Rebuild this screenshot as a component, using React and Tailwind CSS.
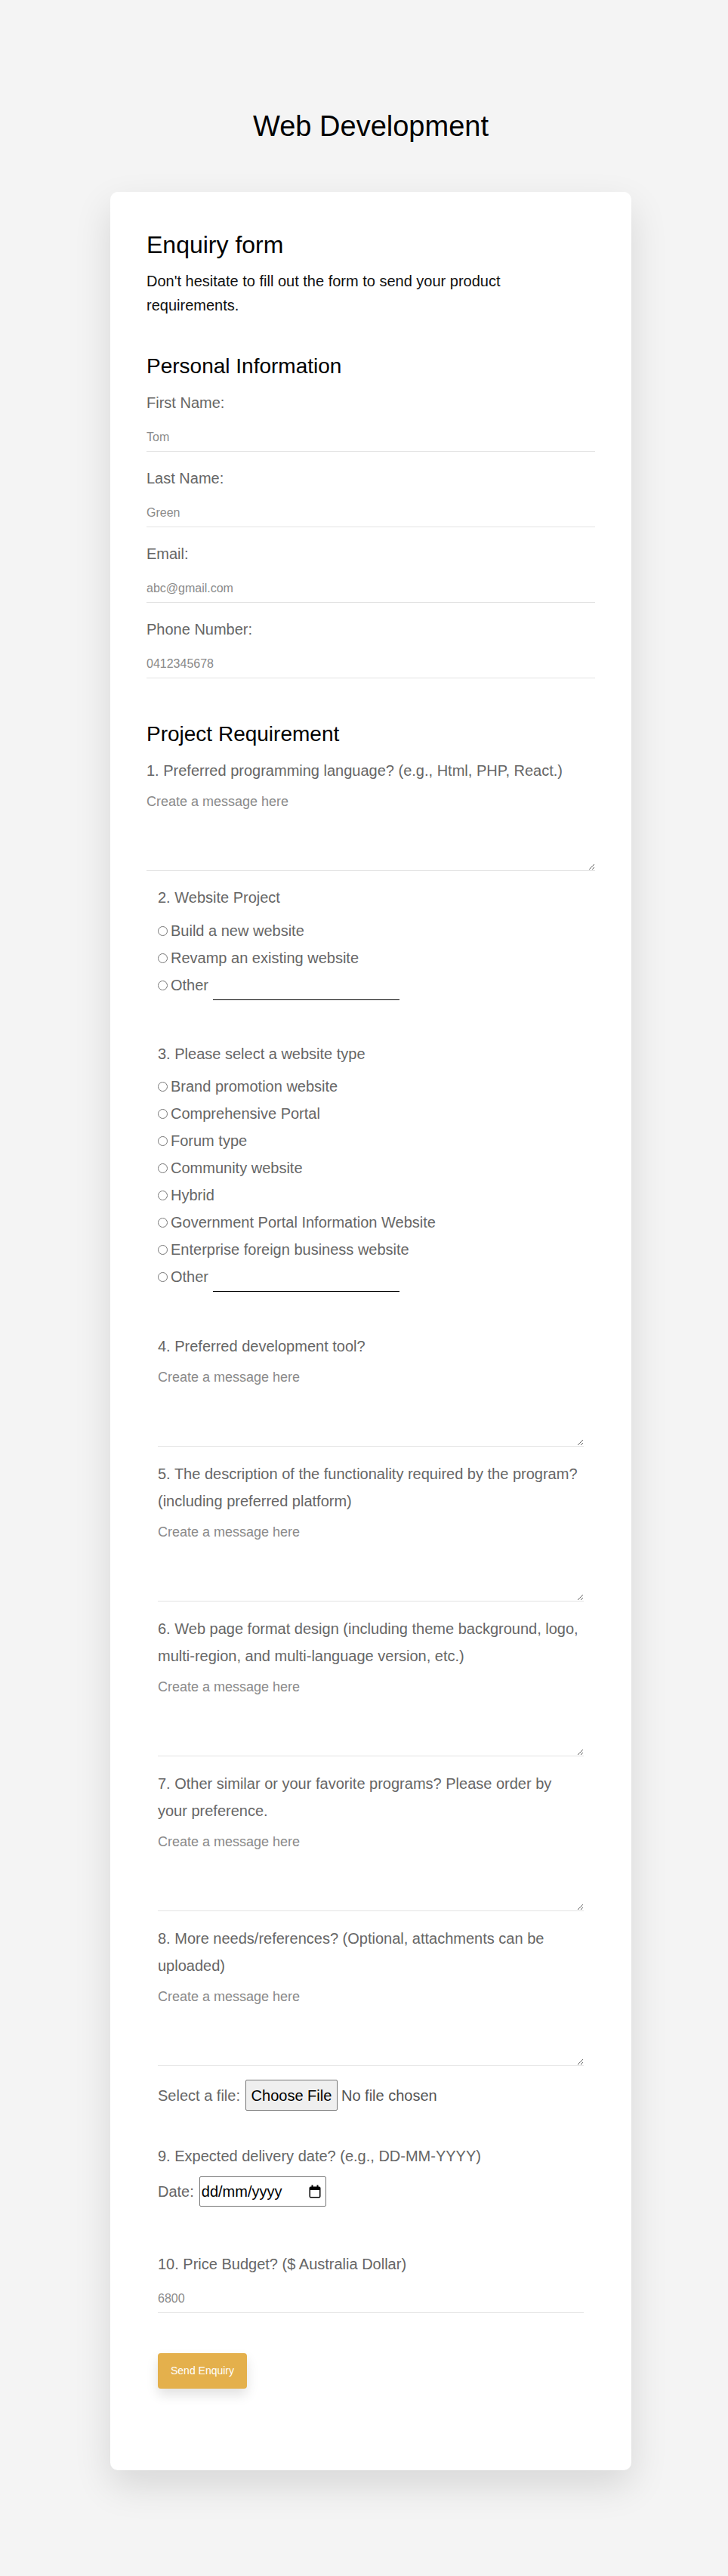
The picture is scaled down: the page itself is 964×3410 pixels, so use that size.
import React from "react";

function Field({ label, placeholder, first }) {
  return (
    <div className={first ? "mt-[14px]" : "mt-[17px]"}>
      <label className="block text-[20px] leading-[36px] text-[#666]">{label}</label>
      <input
        type="text"
        placeholder={placeholder}
        className="mt-[9px] block h-[38px] w-full border-b border-[#e3e3e3] px-0 text-[16px] text-[#555] outline-none placeholder:text-[#8a8a8a]"
      />
    </div>
  );
}

function Radio({ label, name, other }) {
  return (
    <div className="flex h-[36px] items-center text-[20px] leading-[36px] text-[#666]">
      <input type="radio" name={name} className="m-0 mr-[4px] h-[13px] w-[13px] shrink-0" />
      <span>{label}</span>
      {other && (
        <input
          type="text"
          className="ml-[6px] h-[40px] w-[247px] border-b border-black px-0 text-[16px] outline-none"
        />
      )}
    </div>
  );
}

function Question({ text, mt = "mt-[18px]" }) {
  return (
    <div className={mt}>
      <label className="block text-[20px] leading-[36px] text-[#666]">{text}</label>
      <textarea
        placeholder="Create a message here"
        className="mt-[8px] block h-[107px] w-full border-b border-[#e3e3e3] px-0 py-[2px] text-[18px] leading-normal text-[#555] outline-none placeholder:text-[#8a8a8a]"
      />
    </div>
  );
}

function CalendarIcon() {
  return (
    <svg width="16" height="18" viewBox="0 0 16 18" className="shrink-0">
      <rect x="3.5" y="0.5" width="2" height="3" fill="#000" />
      <rect x="10.5" y="0.5" width="2" height="3" fill="#000" />
      <rect x="1.25" y="3.25" width="13.5" height="13.5" rx="1.2" fill="none" stroke="#000" strokeWidth="1.5" />
      <rect x="1" y="3" width="14" height="4" rx="1" fill="#000" />
    </svg>
  );
}

export default function App() {
  const types = [
    "Brand promotion website",
    "Comprehensive Portal",
    "Forum type",
    "Community website",
    "Hybrid",
    "Government Portal Information Website",
    "Enterprise foreign business website",
  ];
  return (
    <div className="min-h-[3410px] bg-[#f4f4f4] pb-[140px] pt-[145px] font-['Liberation_Sans',Arial,sans-serif] text-black">
      <div className="ml-[146px] w-[690px]">
        <h1 className="text-center text-[38px] font-normal leading-[44px] text-black">Web Development</h1>

        <div className="mt-[65px] rounded-[10px] bg-white px-[48px] pb-[108px] pt-[52px] shadow-[0_20px_50px_rgba(0,0,0,0.12)]">
          <h2 className="text-[32px] font-normal leading-[37px] text-black">Enquiry form</h2>
          <p className="mt-[13px] max-w-[585px] text-[20px] leading-[32px] text-[#111]">
            Don't hesitate to fill out the form to send your product requirements.
          </p>

          <h3 className="mt-[49px] text-[28px] font-normal leading-[32px] text-black">Personal Information</h3>
          <Field label="First Name:" placeholder="Tom" first />
          <Field label="Last Name:" placeholder="Green" />
          <Field label="Email:" placeholder="abc@gmail.com" />
          <Field label="Phone Number:" placeholder="0412345678" />

          <h3 className="mt-[58px] text-[28px] font-normal leading-[32px] text-black">Project Requirement</h3>
          <Question text="1. Preferred programming language? (e.g., Html, PHP, React.)" mt="mt-[14px]" />

          <div className="px-[15px]">
            <div className="mt-[17px]">
              <div className="text-[20px] leading-[36px] text-[#666]">2. Website Project</div>
              <div className="mt-[8px]">
                <Radio name="project" label="Build a new website" />
                <Radio name="project" label="Revamp an existing website" />
                <Radio name="project" label="Other" other />
              </div>
            </div>

            <div className="mt-[55px]">
              <div className="text-[20px] leading-[36px] text-[#666]">3. Please select a website type</div>
              <div className="mt-[7px]">
                {types.map((t) => (
                  <Radio key={t} name="type" label={t} />
                ))}
                <Radio name="type" label="Other" other />
              </div>
            </div>

            <Question text="4. Preferred development tool?" mt="mt-[56px]" />
            <Question text="5. The description of the functionality required by the program? (including preferred platform)" />
            <Question text="6. Web page format design (including theme background, logo, multi-region, and multi-language version, etc.)" />
            <Question text="7. Other similar or your favorite programs? Please order by your preference." />
            <Question text="8. More needs/references? (Optional, attachments can be uploaded)" />

            <div className="mt-[18px] flex h-[41px] items-center text-[20px] text-[#666]">
              <span>Select a file:</span>
              <button
                type="button"
                className="ml-[7px] h-[41px] w-[122px] rounded-[2px] border border-[#767676] bg-[#efefef] text-[20px] text-black"
              >
                Choose File
              </button>
              <span className="ml-[5px] text-[#555]">No file chosen</span>
            </div>

            <div className="mt-[42px] text-[20px] leading-[36px] text-[#666]">9. Expected delivery date? (e.g., DD-MM-YYYY)</div>
            <div className="mt-[9px] flex h-[40px] items-center text-[20px] text-[#666]">
              <span>Date:</span>
              <div className="ml-[7px] flex h-[40px] w-[168px] items-center justify-between rounded-[2px] border border-[#767676] pl-[2px] pr-[6px] text-black">
                <span>dd/mm/yyyy</span>
                <CalendarIcon />
              </div>
            </div>

            <div className="mt-[58px] text-[20px] leading-[36px] text-[#666]">10. Price Budget? ($ Australia Dollar)</div>
            <input
              type="text"
              placeholder="6800"
              className="mt-[9px] block h-[38px] w-full border-b border-[#e3e3e3] px-0 text-[16px] text-[#555] outline-none placeholder:text-[#8a8a8a]"
            />

            <button
              type="button"
              className="mt-[53px] block h-[47px] w-[118px] rounded-[4px] bg-[#e4b04c] text-[14px] text-white shadow-[0_8px_16px_rgba(0,0,0,0.12)]"
            >
              Send Enquiry
            </button>
          </div>
        </div>
      </div>
    </div>
  );
}
